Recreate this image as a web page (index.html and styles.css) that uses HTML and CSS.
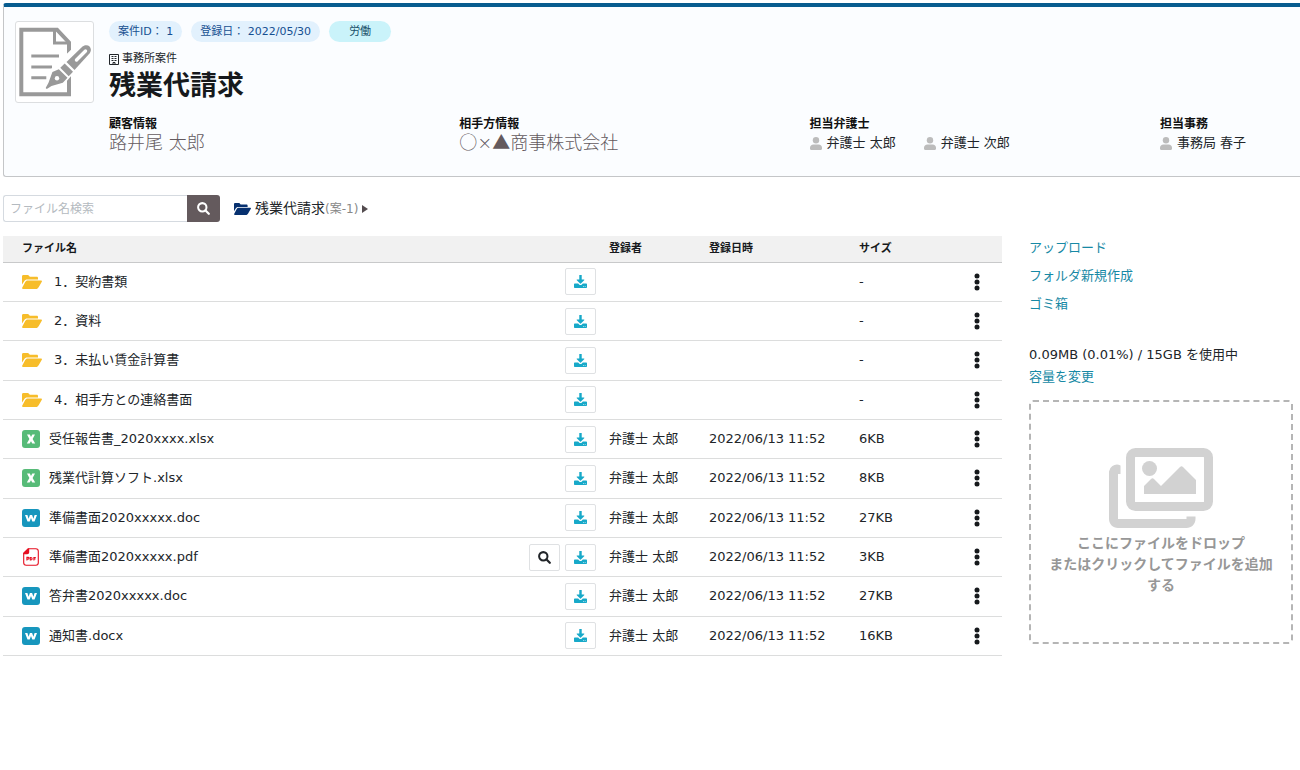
FILE: index.html
```html
<!DOCTYPE html>
<html lang="ja">
<head>
<meta charset="utf-8">
<title>残業代請求</title>
<link rel="stylesheet" href="styles.css">
</head>
<body>
<svg class="sprite" aria-hidden="true">
  <symbol id="folder" viewBox="0 0 20 14"><path d="M1.400 0h4.300c.5 0 .8.200 1.100.5l1 1.200h6.900c.8 0 1.300.5 1.300 1.300v1.500H5.400c-1.500 0-2.500.6-3.200 1.700L0 9.600V1.400C0 .6.600 0 1.400 0z"/><path d="M5.600 5.400H19.200c.7 0 1 .7.6 1.300l-3 5.200c-.7 1.200-1.600 2.100-3 2.100H1c-.8 0-1.100-.7-.7-1.400L3.200 7c.6-1 1.300-1.600 2.400-1.600z"/></symbol>
  <symbol id="download" viewBox="0 0 14 14"><path d="M5.700 0h2.600v4.800h2.300c.5 0 .7.500.4.800L7.400 9.100c-.2.300-.6.300-.8 0L3 5.600c-.3-.3-.1-.8.4-.8h2.300z"/><path fill-rule="evenodd" d="M.8 9.200h3.700l1.300 1.200c.7.600 1.700.6 2.400 0l1.300-1.200h3.700c.5 0 .8.300.8.800v3.200c0 .5-.3.800-.8.800H.8c-.5 0-.8-.3-.8-.8V10c0-.5.3-.8.800-.8zm8.900 2.700v.7h.8v-.7zm1.900 0v.7h.8v-.7z"/></symbol>
  <symbol id="search" viewBox="0 0 14 14"><circle cx="5.700" cy="5.700" r="4.500" fill="none" stroke="currentColor" stroke-width="2.200"/><path d="M9.200 9.200l3.500 3.500" stroke="currentColor" stroke-width="2.400" stroke-linecap="round"/></symbol>
  <symbol id="user" viewBox="0 0 12 13"><circle cx="6" cy="3.200" r="3.200"/><path d="M3.400 7.400h5.200c2 0 3.400 1.400 3.400 3.400v1c0 .7-.5 1.200-1.200 1.200H1.200C.5 13 0 12.500 0 11.800v-1c0-2 1.400-3.400 3.400-3.400z"/></symbol>
  <symbol id="dots" viewBox="0 0 6 18"><circle cx="3" cy="3" r="2.500"/><circle cx="3" cy="9" r="2.500"/><circle cx="3" cy="15" r="2.500"/></symbol>
  <symbol id="excel" viewBox="0 0 18 18"><rect width="18" height="18" rx="3" fill="#57bb78"/><path d="M5 4.500h2.800L9 6.900l1.300-2.400H13L10.600 9l2.600 4.600h-2.900L9 11.200l-1.400 2.400H4.800L7.400 9z" fill="#fff"/></symbol>
  <symbol id="word" viewBox="0 0 18 18"><rect width="18" height="18" rx="3" fill="#1796bd"/><path d="M3 6h2.400l1.200 3.700L7.900 6h2.200l1.300 3.700L12.600 6H15l-2.500 6.500h-2.200L9 9l-1.300 3.500H5.500z" fill="#fff"/></symbol>
  <symbol id="pdf" viewBox="0 0 18 18"><path d="M6.200.8h7.600c1.500 0 2.500 1 2.500 2.500v11.400c0 1.500-1 2.500-2.500 2.500H4.200c-1.500 0-2.500-1-2.500-2.500V5.200z" fill="#fff" stroke="#e60f20" stroke-width="1.100"/><path d="M1.300 6.200V5L6 .5h1.200v3.700c0 1.200-.8 2-2 2z" fill="#e60f20"/><path d="M4.900 12.400V9.400h1.200c1.200 0 1.200 1.700 0 1.700H5M8.300 9.500v2.500h.6c1.600 0 1.600-2.500 0-2.500zM11.900 12.400V9.500h1.900M11.900 10.900h1.600" fill="none" stroke="#e60f20" stroke-width="1.100"/></symbol>
</svg>

<header class="case">
  <div class="case-thumb">
    <svg viewBox="0 0 75 72" aria-hidden="true">
      <path d="M4.300 3.700H40L52 16.500v51.800H4.300z" fill="none" stroke="#999" stroke-width="4"/>
      <path d="M37.500 3v14H53" fill="none" stroke="#999" stroke-width="3"/>
      <path d="M14.300 30H42M14.300 41H35M14.300 51.700h15" stroke="#999" stroke-width="3"/>
      <path d="M26 65l7-21L60 18c4-4 8-5 12-3v14L49 56z" fill="#fff"/>
      <path d="M49.500 36L65.500 20.500c5.500-4 11 1.500 7 7L57.500 44z" fill="#999"/>
      <path d="M59.500 34l9-9" stroke="#fff" stroke-width="3.400" stroke-linecap="round"/>
      <path d="M43.300 41.800l4.400-4.300 8.300 8.300-4.300 4.400z" fill="#999"/>
      <path d="M41.800 43.300l8.700 8.500-4.700 5-11.300 3.200-4.300 2.700c-1 .3-1.600-.3-1.300-1.300l2.500-4.400 4-11z" fill="#999"/>
      <circle cx="40" cy="52.300" r="2.200" fill="#fff"/>
    </svg>
  </div>
  <div class="case-body">
    <div class="tags">
      <span class="tag">案件ID： 1</span>
      <span class="tag">登録日： 2022/05/30</span>
      <span class="tag tag-kind">労働</span>
    </div>
    <p class="office">
      <svg class="office-icon" viewBox="0 0 10 11" aria-hidden="true"><path d="M.5.500h9v10h-9z" fill="none" stroke="currentColor"/><path d="M2.500 2.500h2M5.500 2.500h2M2.500 4.500h2M5.500 4.500h2M2.500 6.500h2M5.500 6.500h2M4 10.500v-2h2v2" fill="none" stroke="currentColor"/></svg>
      事務所案件
    </p>
    <h1 class="case-title">残業代請求</h1>
    <dl class="facts">
      <div><dt>顧客情報</dt><dd class="party">路井尾 太郎</dd></div>
      <div><dt>相手方情報</dt><dd class="party">○×▲商事株式会社</dd></div>
      <div><dt>担当弁護士</dt><dd class="people"><span class="person"><svg class="user-icon"><use href="#user"/></svg>弁護士 太郎</span><span class="person"><svg class="user-icon"><use href="#user"/></svg>弁護士 次郎</span></dd></div>
      <div><dt>担当事務</dt><dd class="people"><span class="person"><svg class="user-icon"><use href="#user"/></svg>事務局 春子</span></dd></div>
    </dl>
  </div>
</header>

<div class="toolbar">
  <form class="search">
    <input class="search-input" type="text" placeholder="ファイル名検索" aria-label="ファイル名検索">
    <button class="search-button" type="button" aria-label="検索"><svg class="search-icon"><use href="#search"/></svg></button>
  </form>
  <nav class="crumbs" aria-label="フォルダ">
    <svg class="crumb-folder"><use href="#folder"/></svg>
    <span>残業代請求<small>(案-1)</small></span>
    <svg class="crumb-arrow" viewBox="0 0 6 8"><path d="M0 0l6 4-6 4z"/></svg>
  </nav>
</div>

<main class="content">
  <table class="files">
    <thead>
      <tr><th class="col-name">ファイル名</th><th class="col-actions"></th><th class="col-user">登録者</th><th class="col-date">登録日時</th><th class="col-size">サイズ</th><th class="col-menu"></th></tr>
    </thead>
    <tbody>
      <tr><td><div class="file folder"><svg class="folder-icon"><use href="#folder"/></svg>1．契約書類</div></td><td><div class="actions"><button class="action" aria-label="ダウンロード"><svg class="action-icon"><use href="#download"/></svg></button></div></td><td></td><td></td><td>-</td><td><button class="menu" aria-label="メニュー"><svg class="menu-icon"><use href="#dots"/></svg></button></td></tr>
      <tr><td><div class="file folder"><svg class="folder-icon"><use href="#folder"/></svg>2．資料</div></td><td><div class="actions"><button class="action" aria-label="ダウンロード"><svg class="action-icon"><use href="#download"/></svg></button></div></td><td></td><td></td><td>-</td><td><button class="menu" aria-label="メニュー"><svg class="menu-icon"><use href="#dots"/></svg></button></td></tr>
      <tr><td><div class="file folder"><svg class="folder-icon"><use href="#folder"/></svg>3．未払い賃金計算書</div></td><td><div class="actions"><button class="action" aria-label="ダウンロード"><svg class="action-icon"><use href="#download"/></svg></button></div></td><td></td><td></td><td>-</td><td><button class="menu" aria-label="メニュー"><svg class="menu-icon"><use href="#dots"/></svg></button></td></tr>
      <tr><td><div class="file folder"><svg class="folder-icon"><use href="#folder"/></svg>4．相手方との連絡書面</div></td><td><div class="actions"><button class="action" aria-label="ダウンロード"><svg class="action-icon"><use href="#download"/></svg></button></div></td><td></td><td></td><td>-</td><td><button class="menu" aria-label="メニュー"><svg class="menu-icon"><use href="#dots"/></svg></button></td></tr>
      <tr><td><div class="file"><svg class="type-icon"><use href="#excel"/></svg>受任報告書_2020xxxx.xlsx</div></td><td><div class="actions"><button class="action" aria-label="ダウンロード"><svg class="action-icon"><use href="#download"/></svg></button></div></td><td>弁護士 太郎</td><td>2022/06/13 11:52</td><td>6KB</td><td><button class="menu" aria-label="メニュー"><svg class="menu-icon"><use href="#dots"/></svg></button></td></tr>
      <tr><td><div class="file"><svg class="type-icon"><use href="#excel"/></svg>残業代計算ソフト.xlsx</div></td><td><div class="actions"><button class="action" aria-label="ダウンロード"><svg class="action-icon"><use href="#download"/></svg></button></div></td><td>弁護士 太郎</td><td>2022/06/13 11:52</td><td>8KB</td><td><button class="menu" aria-label="メニュー"><svg class="menu-icon"><use href="#dots"/></svg></button></td></tr>
      <tr><td><div class="file"><svg class="type-icon"><use href="#word"/></svg>準備書面2020xxxxx.doc</div></td><td><div class="actions"><button class="action" aria-label="ダウンロード"><svg class="action-icon"><use href="#download"/></svg></button></div></td><td>弁護士 太郎</td><td>2022/06/13 11:52</td><td>27KB</td><td><button class="menu" aria-label="メニュー"><svg class="menu-icon"><use href="#dots"/></svg></button></td></tr>
      <tr><td><div class="file"><svg class="type-icon"><use href="#pdf"/></svg>準備書面2020xxxxx.pdf</div></td><td><div class="actions"><button class="action preview" aria-label="プレビュー"><svg class="action-icon"><use href="#search"/></svg></button><button class="action" aria-label="ダウンロード"><svg class="action-icon"><use href="#download"/></svg></button></div></td><td>弁護士 太郎</td><td>2022/06/13 11:52</td><td>3KB</td><td><button class="menu" aria-label="メニュー"><svg class="menu-icon"><use href="#dots"/></svg></button></td></tr>
      <tr><td><div class="file"><svg class="type-icon"><use href="#word"/></svg>答弁書2020xxxxx.doc</div></td><td><div class="actions"><button class="action" aria-label="ダウンロード"><svg class="action-icon"><use href="#download"/></svg></button></div></td><td>弁護士 太郎</td><td>2022/06/13 11:52</td><td>27KB</td><td><button class="menu" aria-label="メニュー"><svg class="menu-icon"><use href="#dots"/></svg></button></td></tr>
      <tr><td><div class="file"><svg class="type-icon"><use href="#word"/></svg>通知書.docx</div></td><td><div class="actions"><button class="action" aria-label="ダウンロード"><svg class="action-icon"><use href="#download"/></svg></button></div></td><td>弁護士 太郎</td><td>2022/06/13 11:52</td><td>16KB</td><td><button class="menu" aria-label="メニュー"><svg class="menu-icon"><use href="#dots"/></svg></button></td></tr>
    </tbody>
  </table>

  <aside class="side">
    <ul class="links">
      <li><a href="#">アップロード</a></li>
      <li><a href="#">フォルダ新規作成</a></li>
      <li><a href="#">ゴミ箱</a></li>
    </ul>
    <div class="usage">0.09MB (0.01%) / 15GB を使用中<br><a href="#">容量を変更</a></div>
    <button class="drop" type="button">
      <svg class="drop-icon" viewBox="0 0 104 80" aria-hidden="true">
        <rect x="21.500" y="4.500" width="78" height="54" rx="5" fill="none" stroke="#d2d2d2" stroke-width="9"/>
        <path d="M11.500 17.500A8 8 0 0 0 0 25.500V71c0 5 4 9 9 9h68.500c5 0 9-4 9-9v-2.500h-9V71H9V26h2.500z" fill="#d2d2d2"/>
        <circle cx="40.500" cy="20.500" r="7.500" fill="#d2d2d2"/>
        <path d="M35 46v-8l7-7c1-1 2-1 3 0l7 7 19-19c1-1 2-1 3 0l13 13v14z" fill="#d2d2d2"/>
      </svg>
      ここにファイルをドロップ<br>またはクリックしてファイルを追加する
    </button>
  </aside>
</main>
</body>
</html>
```

FILE: styles.css
```css
* { box-sizing: border-box; }

body {
  margin: 0;
  padding: 3px 0 0 3px;
  background: #fff;
  color: #212529;
  font: 13px/20px "DejaVu Sans", "Noto Sans CJK JP", sans-serif;
}

a { color: #1789a5; text-decoration: none; }
button { font: inherit; color: inherit; cursor: pointer; }
svg { display: block; flex: none; fill: currentColor; }
.sprite { position: absolute; width: 0; height: 0; }

.case {
  display: flex;
  gap: 15px;
  min-height: 174px;
  padding: 14px 0 16px 11px;
  background: #fbfdff;
  border: 1px solid #c4c6c8;
  border-top: 4px solid #075c8f;
  border-right: 0;
  border-radius: 3px 0 0 3px;
}
.case-thumb {
  flex: none;
  align-self: flex-start;
  width: 79px;
  height: 82px;
  padding: 4px 1px;
  background: #fff;
  border: 1px solid #dcdee0;
  border-radius: 3px;
}
.case-thumb svg { width: 75px; height: 72px; }
.case-body { flex: 1; min-width: 0; }

.tags { display: flex; gap: 9px; font-size: 11px; line-height: 21px; }
.tag { padding: 0 9px; background: #e2f1fd; border-radius: 11px; color: #164f91; }
.tag-kind { padding: 0 20px; background: #caf3fa; color: #174f68; }

.office { display: flex; align-items: center; gap: 3px; margin: 7px 0 0; font-size: 11px; }
.office-icon { width: 10px; height: 11px; }
.case-title { margin: 0; color: #16191c; font-size: 27px; line-height: 34px; }

.facts { display: grid; grid-template-columns: 5fr 5fr 5fr 2fr; margin: 13px 0 0; }
.facts dt { font-size: 12px; line-height: 16px; font-weight: bold; color: #111; }
.facts dd { margin: 0; line-height: 22px; }
.facts .party { color: #635a5e; font-size: 18px; font-weight: 300; }
.people { display: flex; gap: 28px; }
.person { display: flex; align-items: center; gap: 5px; white-space: nowrap; }
.user-icon { width: 12px; height: 13px; color: #bcbcbc; }

.toolbar { display: flex; align-items: center; gap: 14px; margin: 18px 0 14px; }
.search { display: flex; width: 217px; height: 27px; }
.search-input {
  flex: 1;
  min-width: 0;
  padding: 0 6px;
  border: 1px solid #d5dae0;
  border-right: 0;
  border-radius: 3px 0 0 3px;
  font: inherit;
  font-size: 12px;
}
.search-input::placeholder { color: #b4bac0; }
.search-button {
  display: grid;
  place-items: center;
  width: 33px;
  padding: 0;
  border: 0;
  border-radius: 0 3px 3px 0;
  background: #645a5d;
  color: #fff;
}
.search-icon { width: 13px; height: 13px; }
.crumbs { display: flex; align-items: center; gap: 4px; font-size: 14px; }
.crumbs small { color: #888; font-size: 12px; }
.crumb-folder { width: 17px; height: 12px; color: #06306f; }
.crumb-arrow { width: 6px; height: 8px; color: #544c4f; }

.content {
  display: grid;
  grid-template-columns: minmax(0, 1fr) 264px;
  align-items: start;
  gap: 27px;
  padding-right: 7px;
}

.files { width: 100%; height: 420px; border-collapse: collapse; table-layout: fixed; }
.files th {
  height: 26px;
  padding: 0 0 0 10px;
  background: #f1f1f1;
  border-bottom: 1px solid #c8c9ca;
  color: #16191c;
  font-size: 11px;
  text-align: left;
}
.files td { padding: 0 0 0 10px; border-bottom: 1px solid #dcdddd; white-space: nowrap; }
.files th:first-child, .files td:first-child { padding-left: 19px; }
.files td:nth-child(2) { padding: 0 3px 0 0; }
.files td:last-child { padding: 0; }
.col-actions { width: 100px; }
.col-user { width: 100px; }
.col-date { width: 150px; }
.col-size { width: 103px; }
.col-menu { width: 50px; }

.file { display: flex; align-items: center; gap: 9px; }
.folder { gap: 12px; }
.folder-icon { width: 20px; height: 14px; color: #f7bd2a; }
.type-icon { width: 18px; height: 18px; }
.actions { display: flex; justify-content: flex-end; gap: 5px; }
.action {
  display: grid;
  place-items: center;
  width: 31px;
  height: 27px;
  padding: 0;
  background: #fff;
  border: 1px solid #dfe1e3;
  border-radius: 2px;
  color: #17a9c9;
}
.preview { color: #212529; }
.action-icon { width: 13px; height: 13px; }
.menu { display: grid; place-items: center; width: 50px; padding: 0; border: 0; background: none; color: #16191c; }
.menu-icon { width: 6px; height: 18px; }

.side { padding-top: 2px; }
.links { display: grid; gap: 8px; margin: 0 0 30px; padding: 0; list-style: none; }
.usage { line-height: 22px; font-size: 13px; }
.drop {
  display: block;
  width: 100%;
  min-height: 244px;
  margin-top: 12px;
  padding: 0 16px;
  background: #fff;
  border: 2px dashed #b5b5b5;
  border-radius: 4px;
  color: #979797;
  font-size: 14px;
  font-weight: bold;
  line-height: 21px;
}
.drop-icon { width: 104px; height: 80px; margin: 0 auto 5px; }
```
